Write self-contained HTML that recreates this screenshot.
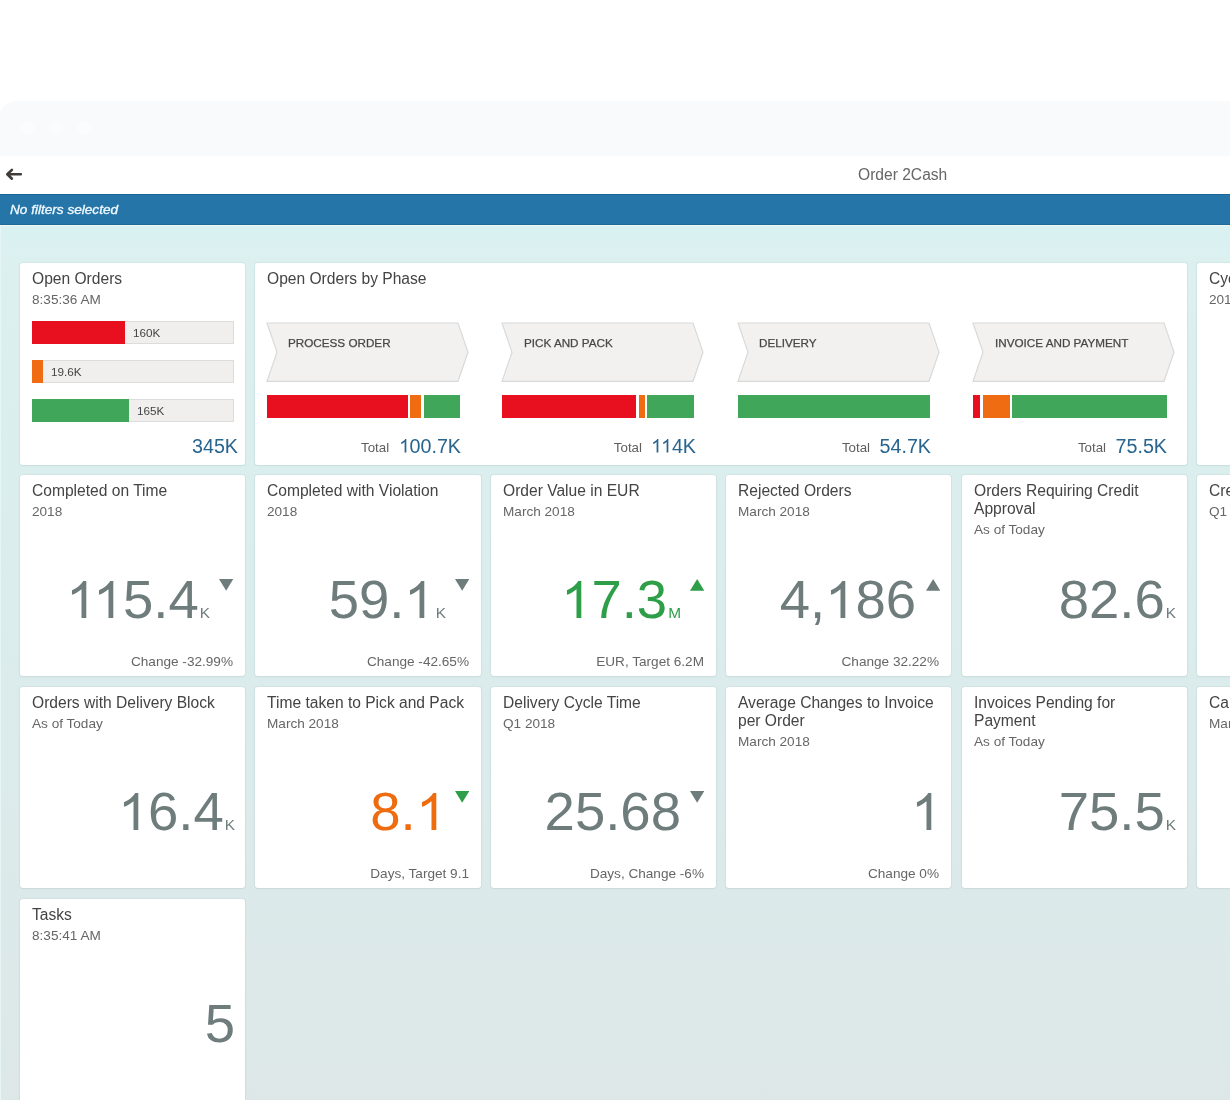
<!DOCTYPE html><html><head><meta charset="utf-8"><style>
html,body{margin:0;padding:0}
body{width:1230px;height:1100px;overflow:hidden;position:relative;background:#fff;font-family:"Liberation Sans",sans-serif}
.t{position:absolute;white-space:nowrap;line-height:1;will-change:transform}
.tile{position:absolute;background:#fff;border-radius:3px;box-shadow:0 0 0 1px rgba(120,150,160,0.09),0 1px 2px rgba(100,130,140,0.08)}
</style></head><body>
<div style="position:absolute;left:0;top:101px;width:1300px;height:55px;background:#f8fafc;border-top-left-radius:16px"></div>
<div style="position:absolute;left:20px;top:120.5px;width:14px;height:14px;border-radius:7px;background:#fbfcfe"></div>
<div style="position:absolute;left:49px;top:120.5px;width:14px;height:14px;border-radius:7px;background:#fbfcfe"></div>
<div style="position:absolute;left:78px;top:120.5px;width:14px;height:14px;border-radius:7px;background:#fbfcfe"></div>
<div style="position:absolute;left:0;top:156px;width:1230px;height:38px;background:#fff"></div>
<svg style="position:absolute;left:0;top:160px" width="30" height="30"><path d="M20.8 14.3H8 M11.9 9.9 L7.3 14.3 L11.9 18.7" fill="none" stroke="#413c38" stroke-width="2.6" stroke-linecap="round" stroke-linejoin="round"/></svg>
<div class="t" style="left:858.00px;top:166.54px;font-size:15.6px;color:#666;">Order 2Cash</div>
<div style="position:absolute;left:0;top:194px;width:1230px;height:31px;background:#2575a8;border-top:1px solid #1c6797;border-bottom:1px solid #1f6a9a;box-sizing:border-box"></div>
<div class="t" style="left:10.00px;top:203.04px;font-size:13.6px;color:#f0f9ff;font-style:italic;letter-spacing:0px;-webkit-text-stroke:0.35px #f0f9ff">No filters selected</div>
<div style="position:absolute;left:0;top:225px;width:1230px;height:875px;background:linear-gradient(#d9f1f2 0%,#dcf0f0 4%,#dbeded 40%,#dde7e8 100%)"></div>
<div style="position:absolute;left:0;top:225px;width:1230px;height:1px;background:#eef6f0"></div>
<div style="position:absolute;left:0;top:226px;width:1px;height:874px;background:#e6f5f5"></div>

<div class="tile" style="left:20.00px;top:263.00px;width:225.20px;height:201.50px"></div>
<div class="tile" style="left:255.40px;top:263.00px;width:931.40px;height:201.50px"></div>
<div class="tile" style="left:1197.00px;top:263.00px;width:225.20px;height:201.50px"></div>
<div class="t" style="left:31.90px;top:270.94px;font-size:15.6px;color:#444;">Open Orders</div>
<div class="t" style="left:31.90px;top:293.14px;font-size:13.6px;color:#666;">8:35:36 AM</div>
<div style="position:absolute;left:32px;top:320.70px;width:202px;height:23px;background:#f0efee;box-sizing:border-box;border:1px solid #dcdcdc"></div>
<div style="position:absolute;left:32px;top:320.70px;width:93.20px;height:23px;background:#e8101e"></div>
<div class="t" style="left:133.20px;top:326.75px;font-size:11.7px;color:#444;">160K</div>
<div style="position:absolute;left:32px;top:359.60px;width:202px;height:23px;background:#f0efee;box-sizing:border-box;border:1px solid #dcdcdc"></div>
<div style="position:absolute;left:32px;top:359.60px;width:10.90px;height:23px;background:#ef6c12"></div>
<div class="t" style="left:50.90px;top:365.65px;font-size:11.7px;color:#444;">19.6K</div>
<div style="position:absolute;left:32px;top:398.50px;width:202px;height:23px;background:#f0efee;box-sizing:border-box;border:1px solid #dcdcdc"></div>
<div style="position:absolute;left:32px;top:398.50px;width:96.80px;height:23px;background:#3fa65a"></div>
<div class="t" style="left:136.80px;top:404.56px;font-size:11.7px;color:#444;">165K</div>
<div class="t" style="left:-362.00px;width:600px;text-align:right;top:436.75px;font-size:19.7px;color:#27658f;">345K</div>
<div class="t" style="left:267.30px;top:270.94px;font-size:15.6px;color:#444;">Open Orders by Phase</div>
<svg style="position:absolute;left:265.90px;top:321.7px" width="204" height="60.3"><polygon points="1,1 192,1 202,30.15 192,59.3 1,59.3 11,30.15" fill="#f2f1f0" stroke="#d9d9d9" stroke-width="1.2"/></svg>
<div class="t" style="left:288.40px;top:337.45px;font-size:11.7px;color:#474747;-webkit-text-stroke:0.25px #474747">PROCESS ORDER</div>
<div style="position:absolute;left:266.90px;top:395px;width:140.90px;height:23px;background:#e8101e"></div>
<div style="position:absolute;left:410.30px;top:395px;width:10.90px;height:23px;background:#ef6c12"></div>
<div style="position:absolute;left:423.70px;top:395px;width:35.90px;height:23px;background:#3fa65a"></div>
<div class="t" style="left:-139.40px;width:600px;text-align:right;top:436.65px;font-size:19.7px;color:#27658f;"><span style="font-size:13.3px;color:#5e5e5e;margin-right:9.5px;position:relative;top:-1px">Total</span><span style="display:inline-block;width:0.556em;height:0.688em;position:relative"><svg style="position:absolute;left:0;top:0;width:100%;height:100%" viewBox="0 0 1139 1472" preserveAspectRatio="none"><path d="M763 1472H583V325Q518 387 413 449Q308 511 224 542V368Q375 297 488 196Q601 95 648 0H763Z" fill="currentColor"/></svg></span>00.7K</div>
<svg style="position:absolute;left:501.30px;top:321.7px" width="204" height="60.3"><polygon points="1,1 192,1 202,30.15 192,59.3 1,59.3 11,30.15" fill="#f2f1f0" stroke="#d9d9d9" stroke-width="1.2"/></svg>
<div class="t" style="left:523.80px;top:337.45px;font-size:11.7px;color:#474747;-webkit-text-stroke:0.25px #474747">PICK AND PACK</div>
<div style="position:absolute;left:502.30px;top:395px;width:134.00px;height:23px;background:#e8101e"></div>
<div style="position:absolute;left:638.80px;top:395px;width:6.00px;height:23px;background:#ef6c12"></div>
<div style="position:absolute;left:647.30px;top:395px;width:47.00px;height:23px;background:#3fa65a"></div>
<div class="t" style="left:96.00px;width:600px;text-align:right;top:436.65px;font-size:19.7px;color:#27658f;"><span style="font-size:13.3px;color:#5e5e5e;margin-right:9.5px;position:relative;top:-1px">Total</span><span style="display:inline-block;width:0.556em;height:0.688em;position:relative;margin-right:-0.0742em"><svg style="position:absolute;left:0;top:0;width:100%;height:100%" viewBox="0 0 1139 1472" preserveAspectRatio="none"><path d="M763 1472H583V325Q518 387 413 449Q308 511 224 542V368Q375 297 488 196Q601 95 648 0H763Z" fill="currentColor"/></svg></span><span style="display:inline-block;width:0.556em;height:0.688em;position:relative"><svg style="position:absolute;left:0;top:0;width:100%;height:100%" viewBox="0 0 1139 1472" preserveAspectRatio="none"><path d="M763 1472H583V325Q518 387 413 449Q308 511 224 542V368Q375 297 488 196Q601 95 648 0H763Z" fill="currentColor"/></svg></span>4K</div>
<svg style="position:absolute;left:736.70px;top:321.7px" width="204" height="60.3"><polygon points="1,1 192,1 202,30.15 192,59.3 1,59.3 11,30.15" fill="#f2f1f0" stroke="#d9d9d9" stroke-width="1.2"/></svg>
<div class="t" style="left:759.20px;top:337.45px;font-size:11.7px;color:#474747;-webkit-text-stroke:0.25px #474747">DELIVERY</div>
<div style="position:absolute;left:737.70px;top:395px;width:192.70px;height:23px;background:#3fa65a"></div>
<div class="t" style="left:331.40px;width:600px;text-align:right;top:436.65px;font-size:19.7px;color:#27658f;"><span style="font-size:13.3px;color:#5e5e5e;margin-right:9.5px;position:relative;top:-1px">Total</span>54.7K</div>
<svg style="position:absolute;left:972.10px;top:321.7px" width="204" height="60.3"><polygon points="1,1 192,1 202,30.15 192,59.3 1,59.3 11,30.15" fill="#f2f1f0" stroke="#d9d9d9" stroke-width="1.2"/></svg>
<div class="t" style="left:994.60px;top:337.45px;font-size:11.7px;color:#474747;-webkit-text-stroke:0.25px #474747">INVOICE AND PAYMENT</div>
<div style="position:absolute;left:973.10px;top:395px;width:7.00px;height:23px;background:#e8101e"></div>
<div style="position:absolute;left:982.60px;top:395px;width:27.00px;height:23px;background:#ef6c12"></div>
<div style="position:absolute;left:1012.10px;top:395px;width:155.00px;height:23px;background:#3fa65a"></div>
<div class="t" style="left:566.80px;width:600px;text-align:right;top:436.65px;font-size:19.7px;color:#27658f;"><span style="font-size:13.3px;color:#5e5e5e;margin-right:9.5px;position:relative;top:-1px">Total</span>75.5K</div>
<div class="t" style="left:1208.90px;top:270.94px;font-size:15.6px;color:#444;">Cycle Time</div>
<div class="t" style="left:1208.90px;top:293.14px;font-size:13.6px;color:#666;">2018</div>
<div class="tile" style="left:20.00px;top:474.90px;width:225.20px;height:201.50px"></div>
<div class="tile" style="left:255.40px;top:474.90px;width:225.20px;height:201.50px"></div>
<div class="tile" style="left:490.80px;top:474.90px;width:225.20px;height:201.50px"></div>
<div class="tile" style="left:726.20px;top:474.90px;width:225.20px;height:201.50px"></div>
<div class="tile" style="left:961.60px;top:474.90px;width:225.20px;height:201.50px"></div>
<div class="tile" style="left:1197.00px;top:474.90px;width:225.20px;height:201.50px"></div>
<div class="t" style="left:31.90px;top:482.84px;font-size:15.6px;color:#444;">Completed on Time</div>
<div class="t" style="left:31.90px;top:505.04px;font-size:13.6px;color:#666;">2018</div>
<div class="t" style="left:-189.80px;width:400px;text-align:right;top:573.17px;font-size:54.5px;color:#6f7c7c"><span style="display:inline-block;width:0.556em;height:0.688em;position:relative;margin-right:-0.0742em"><svg style="position:absolute;left:0;top:0;width:100%;height:100%" viewBox="0 0 1139 1472" preserveAspectRatio="none"><path d="M763 1472H583V325Q518 387 413 449Q308 511 224 542V368Q375 297 488 196Q601 95 648 0H763Z" fill="currentColor"/></svg></span><span style="display:inline-block;width:0.556em;height:0.688em;position:relative"><svg style="position:absolute;left:0;top:0;width:100%;height:100%" viewBox="0 0 1139 1472" preserveAspectRatio="none"><path d="M763 1472H583V325Q518 387 413 449Q308 511 224 542V368Q375 297 488 196Q601 95 648 0H763Z" fill="currentColor"/></svg></span>5.4<span style="font-size:15.4px;margin-left:1px">K</span></div>
<svg style="position:absolute;left:219.40px;top:579.10px" width="14.3" height="11.8"><polygon points="0,0 14.3,0 7.15,11.8" fill="#6f7c7c"/></svg>
<div class="t" style="left:-366.80px;width:600px;text-align:right;top:654.74px;font-size:13.6px;color:#666;">Change -32.99%</div>
<div class="t" style="left:267.30px;top:482.84px;font-size:15.6px;color:#444;">Completed with Violation</div>
<div class="t" style="left:267.30px;top:505.04px;font-size:13.6px;color:#666;">2018</div>
<div class="t" style="left:45.60px;width:400px;text-align:right;top:573.17px;font-size:54.5px;color:#6f7c7c">59.<span style="display:inline-block;width:0.556em;height:0.688em;position:relative"><svg style="position:absolute;left:0;top:0;width:100%;height:100%" viewBox="0 0 1139 1472" preserveAspectRatio="none"><path d="M763 1472H583V325Q518 387 413 449Q308 511 224 542V368Q375 297 488 196Q601 95 648 0H763Z" fill="currentColor"/></svg></span><span style="font-size:15.4px;margin-left:1px">K</span></div>
<svg style="position:absolute;left:454.80px;top:579.10px" width="14.3" height="11.8"><polygon points="0,0 14.3,0 7.15,11.8" fill="#6f7c7c"/></svg>
<div class="t" style="left:-131.40px;width:600px;text-align:right;top:654.74px;font-size:13.6px;color:#666;">Change -42.65%</div>
<div class="t" style="left:502.70px;top:482.84px;font-size:15.6px;color:#444;">Order Value in EUR</div>
<div class="t" style="left:502.70px;top:505.04px;font-size:13.6px;color:#666;">March 2018</div>
<div class="t" style="left:281.00px;width:400px;text-align:right;top:573.17px;font-size:54.5px;color:#2e9e48"><span style="display:inline-block;width:0.556em;height:0.688em;position:relative"><svg style="position:absolute;left:0;top:0;width:100%;height:100%" viewBox="0 0 1139 1472" preserveAspectRatio="none"><path d="M763 1472H583V325Q518 387 413 449Q308 511 224 542V368Q375 297 488 196Q601 95 648 0H763Z" fill="currentColor"/></svg></span>7.3<span style="font-size:15.4px;margin-left:1px">M</span></div>
<svg style="position:absolute;left:690.20px;top:579.10px" width="14.3" height="11.8"><polygon points="0,11.8 7.15,0 14.3,11.8" fill="#2e9e48"/></svg>
<div class="t" style="left:104.00px;width:600px;text-align:right;top:654.74px;font-size:13.6px;color:#666;">EUR, Target 6.2M</div>
<div class="t" style="left:738.10px;top:482.84px;font-size:15.6px;color:#444;">Rejected Orders</div>
<div class="t" style="left:738.10px;top:505.04px;font-size:13.6px;color:#666;">March 2018</div>
<div class="t" style="left:516.40px;width:400px;text-align:right;top:573.17px;font-size:54.5px;color:#6f7c7c">4,<span style="display:inline-block;width:0.556em;height:0.688em;position:relative"><svg style="position:absolute;left:0;top:0;width:100%;height:100%" viewBox="0 0 1139 1472" preserveAspectRatio="none"><path d="M763 1472H583V325Q518 387 413 449Q308 511 224 542V368Q375 297 488 196Q601 95 648 0H763Z" fill="currentColor"/></svg></span>86</div>
<svg style="position:absolute;left:925.60px;top:579.10px" width="14.3" height="11.8"><polygon points="0,11.8 7.15,0 14.3,11.8" fill="#6f7c7c"/></svg>
<div class="t" style="left:339.40px;width:600px;text-align:right;top:654.74px;font-size:13.6px;color:#666;">Change 32.22%</div>
<div class="t" style="left:973.50px;top:482.84px;font-size:15.6px;color:#444;">Orders Requiring Credit</div>
<div class="t" style="left:973.50px;top:500.64px;font-size:15.6px;color:#444;">Approval</div>
<div class="t" style="left:973.50px;top:522.84px;font-size:13.6px;color:#666;">As of Today</div>
<div class="t" style="left:776.30px;width:400px;text-align:right;top:573.17px;font-size:54.5px;color:#6f7c7c">82.6<span style="font-size:15.4px;margin-left:1px">K</span></div>
<div class="t" style="left:1208.90px;top:482.84px;font-size:15.6px;color:#444;">Credit Block</div>
<div class="t" style="left:1208.90px;top:505.04px;font-size:13.6px;color:#666;">Q1 2018</div>
<div class="tile" style="left:20.00px;top:686.80px;width:225.20px;height:201.50px"></div>
<div class="tile" style="left:255.40px;top:686.80px;width:225.20px;height:201.50px"></div>
<div class="tile" style="left:490.80px;top:686.80px;width:225.20px;height:201.50px"></div>
<div class="tile" style="left:726.20px;top:686.80px;width:225.20px;height:201.50px"></div>
<div class="tile" style="left:961.60px;top:686.80px;width:225.20px;height:201.50px"></div>
<div class="tile" style="left:1197.00px;top:686.80px;width:225.20px;height:201.50px"></div>
<div class="t" style="left:31.90px;top:694.74px;font-size:15.6px;color:#444;">Orders with Delivery Block</div>
<div class="t" style="left:31.90px;top:716.94px;font-size:13.6px;color:#666;">As of Today</div>
<div class="t" style="left:-165.30px;width:400px;text-align:right;top:785.07px;font-size:54.5px;color:#6f7c7c"><span style="display:inline-block;width:0.556em;height:0.688em;position:relative"><svg style="position:absolute;left:0;top:0;width:100%;height:100%" viewBox="0 0 1139 1472" preserveAspectRatio="none"><path d="M763 1472H583V325Q518 387 413 449Q308 511 224 542V368Q375 297 488 196Q601 95 648 0H763Z" fill="currentColor"/></svg></span>6.4<span style="font-size:15.4px;margin-left:1px">K</span></div>
<div class="t" style="left:267.30px;top:694.74px;font-size:15.6px;color:#444;">Time taken to Pick and Pack</div>
<div class="t" style="left:267.30px;top:716.94px;font-size:13.6px;color:#666;">March 2018</div>
<div class="t" style="left:45.60px;width:400px;text-align:right;top:785.07px;font-size:54.5px;color:#ee6b0e">8.<span style="display:inline-block;width:0.556em;height:0.688em;position:relative"><svg style="position:absolute;left:0;top:0;width:100%;height:100%" viewBox="0 0 1139 1472" preserveAspectRatio="none"><path d="M763 1472H583V325Q518 387 413 449Q308 511 224 542V368Q375 297 488 196Q601 95 648 0H763Z" fill="currentColor"/></svg></span></div>
<svg style="position:absolute;left:454.80px;top:791.00px" width="14.3" height="11.8"><polygon points="0,0 14.3,0 7.15,11.8" fill="#2e9e48"/></svg>
<div class="t" style="left:-131.40px;width:600px;text-align:right;top:866.64px;font-size:13.6px;color:#666;">Days, Target 9.1</div>
<div class="t" style="left:502.70px;top:694.74px;font-size:15.6px;color:#444;">Delivery Cycle Time</div>
<div class="t" style="left:502.70px;top:716.94px;font-size:13.6px;color:#666;">Q1 2018</div>
<div class="t" style="left:281.00px;width:400px;text-align:right;top:785.07px;font-size:54.5px;color:#6f7c7c">25.68</div>
<svg style="position:absolute;left:690.20px;top:791.00px" width="14.3" height="11.8"><polygon points="0,0 14.3,0 7.15,11.8" fill="#6f7c7c"/></svg>
<div class="t" style="left:104.00px;width:600px;text-align:right;top:866.64px;font-size:13.6px;color:#666;">Days, Change -6%</div>
<div class="t" style="left:738.10px;top:694.74px;font-size:15.6px;color:#444;">Average Changes to Invoice</div>
<div class="t" style="left:738.10px;top:712.54px;font-size:15.6px;color:#444;">per Order</div>
<div class="t" style="left:738.10px;top:734.74px;font-size:13.6px;color:#666;">March 2018</div>
<div class="t" style="left:540.90px;width:400px;text-align:right;top:785.07px;font-size:54.5px;color:#6f7c7c"><span style="display:inline-block;width:0.556em;height:0.688em;position:relative"><svg style="position:absolute;left:0;top:0;width:100%;height:100%" viewBox="0 0 1139 1472" preserveAspectRatio="none"><path d="M763 1472H583V325Q518 387 413 449Q308 511 224 542V368Q375 297 488 196Q601 95 648 0H763Z" fill="currentColor"/></svg></span></div>
<div class="t" style="left:339.40px;width:600px;text-align:right;top:866.64px;font-size:13.6px;color:#666;">Change 0%</div>
<div class="t" style="left:973.50px;top:694.74px;font-size:15.6px;color:#444;">Invoices Pending for</div>
<div class="t" style="left:973.50px;top:712.54px;font-size:15.6px;color:#444;">Payment</div>
<div class="t" style="left:973.50px;top:734.74px;font-size:13.6px;color:#666;">As of Today</div>
<div class="t" style="left:776.30px;width:400px;text-align:right;top:785.07px;font-size:54.5px;color:#6f7c7c">75.5<span style="font-size:15.4px;margin-left:1px">K</span></div>
<div class="t" style="left:1208.90px;top:694.74px;font-size:15.6px;color:#444;">Cancelled</div>
<div class="t" style="left:1208.90px;top:716.94px;font-size:13.6px;color:#666;">March 2018</div>
<div class="tile" style="left:20.00px;top:898.70px;width:225.20px;height:300.00px"></div>
<div class="t" style="left:31.90px;top:906.64px;font-size:15.6px;color:#444;">Tasks</div>
<div class="t" style="left:31.90px;top:928.84px;font-size:13.6px;color:#666;">8:35:41 AM</div>
<div class="t" style="left:-165.30px;width:400px;text-align:right;top:996.97px;font-size:54.5px;color:#6f7c7c">5</div>
</body></html>
